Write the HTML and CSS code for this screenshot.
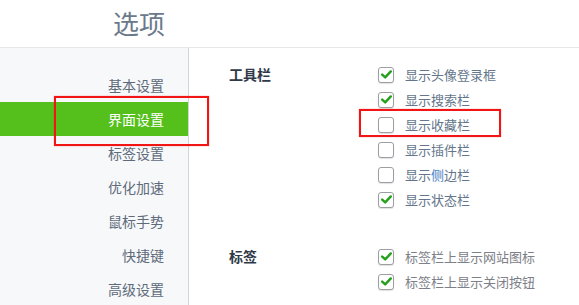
FILE: index.html
```html
<!DOCTYPE html>
<html lang="zh-CN">
<head>
    <meta charset="UTF-8">
    <link rel="stylesheet" href="styles.css">
    <title>选项</title>
</head>
<body>
    <div class="header">
        <h1>选项</h1>
    </div>
    <div class="main">
        <ul class="sidebar">
            <li>基本设置</li>
            <li class="active">界面设置</li>
            <li>标签设置</li>
            <li>优化加速</li>
            <li>鼠标手势</li>
            <li>快捷键</li>
            <li>高级设置</li>
        </ul>
        <div class="content">
            <div class="group">
                <div class="group-title">工具栏</div>
                <div class="options">
                    <label class="option"><span class="box checked"></span>显示头像登录框</label>
                    <label class="option"><span class="box checked"></span>显示搜索栏</label>
                    <label class="option"><span class="box"></span>显示收藏栏</label>
                    <label class="option"><span class="box"></span>显示插件栏</label>
                    <label class="option"><span class="box"></span>显示<span class="blue">侧</span>边栏</label>
                    <label class="option"><span class="box checked"></span>显示状态栏</label>
                </div>
            </div>
            <div class="group">
                <div class="group-title">标签</div>
                <div class="options faded">
                    <label class="option"><span class="box checked"></span>标签栏上显示网站图标</label>
                    <label class="option"><span class="box checked"></span>标签栏上显示关闭按钮</label>
                </div>
            </div>
        </div>
    </div>

    <div class="mark mark-nav"></div>
    <div class="mark mark-option"></div>

    <script>
        const tick = '<svg width="11" height="9" viewBox="0 0 11 9"><path d="M1.2 4.6 L4.2 7.4 L9.8 1.4" fill="none" stroke="#24a11a" stroke-width="2.4" stroke-linecap="round" stroke-linejoin="round"/></svg>';
        document.querySelectorAll(".box.checked").forEach(function (box) {
            box.innerHTML = tick;
        });
    </script>
</body>
</html>
```

FILE: styles.css
```css
body {
    margin: 0;
    font-family: "Noto Sans CJK SC", "Microsoft YaHei", sans-serif;
    background-color: #fff;
    width: 579px;
    height: 305px;
    overflow: hidden;
    position: relative;
}

.header {
    height: 47px;
    border-bottom: 1px solid #e6e8ea;
}

.header h1 {
    margin: 0;
    padding-left: 113px;
    font-size: 26px;
    font-weight: normal;
    line-height: 45px;
    color: #6a7a8c;
}

.main {
    display: flex;
    height: 257px;
}

.sidebar {
    list-style: none;
    margin: 0;
    padding: 20px 0 0;
    width: 188px;
    background-color: #f7f8fa;
    border-right: 1px solid #d3d5d8;
}

.sidebar li {
    height: 34px;
    line-height: 34px;
    text-align: right;
    padding-right: 24px;
    font-size: 14px;
    color: #5e6b7a;
}

.sidebar li.active {
    background-color: #55bf1c;
    color: #fff;
}

.content {
    flex: 1;
    padding: 14px 0 0 40px;
}

.group {
    display: flex;
    margin-bottom: 32px;
}

.group-title {
    width: 149px;
    font-size: 14px;
    font-weight: bold;
    color: #2f3a48;
    line-height: 25px;
}

.options {
    display: flex;
    flex-direction: column;
}

.option {
    display: flex;
    align-items: center;
    height: 25px;
    font-size: 13px;
    color: #64768b;
}

.faded .option {
    color: #7d8088;
}

.blue {
    color: #4a7ec6;
}

.box {
    width: 14px;
    height: 14px;
    border: 1px solid #9b9fa4;
    border-radius: 3px;
    background-color: #fff;
    box-shadow: 0 1px 1px rgba(0, 0, 0, 0.12);
    margin-right: 11px;
    display: flex;
    align-items: center;
    justify-content: center;
}

.mark {
    position: absolute;
    border: 2px solid #f21515;
    box-shadow: 0 0 1px rgba(240, 20, 20, 0.6);
}

.mark-nav {
    left: 54px;
    top: 96px;
    width: 151px;
    height: 46px;
}

.mark-option {
    left: 359px;
    top: 109px;
    width: 138px;
    height: 24px;
}
```
